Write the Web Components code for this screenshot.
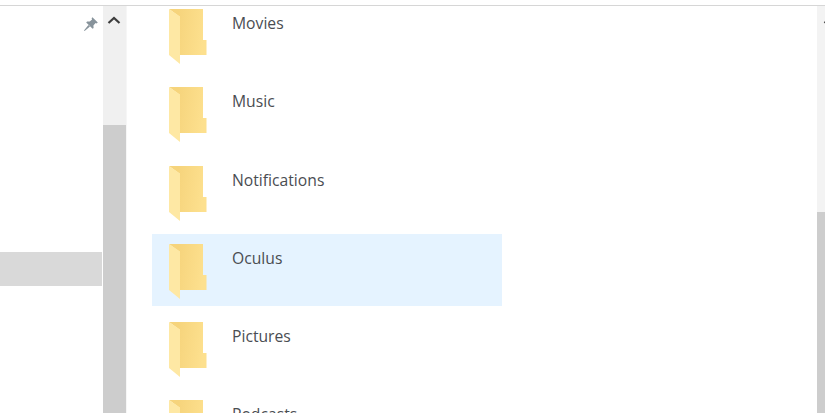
<!DOCTYPE html>
<html>
<head>
<meta charset="utf-8">
<style>
    html, body { margin: 0; padding: 0; background: #fff; }
    body { width: 825px; height: 413px; overflow: hidden; font-family: "Open Sans", "Noto Sans", sans-serif; }
</style>
</head>
<body>
<explorer-window>
    <side-pane slot="side"></side-pane>
    <scroll-rail slot="side" width="24" track="120" edge arrow></scroll-rail>
    <folder-list slot="main">
        <folder-row>Movies</folder-row>
        <folder-row>Music</folder-row>
        <folder-row>Notifications</folder-row>
        <folder-row selected>Oculus</folder-row>
        <folder-row>Pictures</folder-row>
        <folder-row>Podcasts</folder-row>
    </folder-list>
    <scroll-rail slot="right" width="8" track="207" clipped arrow></scroll-rail>
</explorer-window>

<script>
class ExplorerWindow extends HTMLElement {
    constructor() {
        super();
        this.attachShadow({mode: "open"}).innerHTML = `
        <style>
            :host {
                display: grid;
                grid-template-columns: 127px 1fr 8px;
                height: 413px;
                padding-top: 6px;
                box-sizing: border-box;
                background:
                    linear-gradient(#d6d6d6, #d6d6d6) 0 5px / 100% 1px no-repeat,
                    #fff;
            }
            .side { display: flex; min-height: 0; }
            .main { overflow: hidden; min-width: 0; }
            .right { display: flex; min-height: 0; }
        </style>
        <div class="side"><slot name="side"></slot></div>
        <div class="main"><slot name="main"></slot></div>
        <div class="right"><slot name="right"></slot></div>
        `;
    }
}

class SidePane extends HTMLElement {
    constructor() {
        super();
        this.attachShadow({mode: "open"}).innerHTML = `
        <style>
            :host {
                display: flex;
                flex-direction: column;
                width: 103px;
                flex: none;
            }
            .pin { display: flex; justify-content: flex-end; padding: 10px 4px 0 0; height: 16px; }
            svg { filter: blur(.3px); }
            .current {
                margin-top: 220px;
                height: 34px;
                width: 102px;
                background: #d9d9d9;
            }
        </style>
        <div class="pin">
            <svg width="16" height="16" viewBox="0 0 16 16">
                <g fill="#87939b">
                    <path d="M9.4 1.2 L14.8 6.6 L13.6 7.4 L12.6 6.9 L10.4 9.4 L10.6 12 L9.6 12.8 L3.2 6.4 L4.1 5.5 L6.7 5.6 L9.1 3.4 L8.6 2.3 Z"/>
                    <path d="M5.4 9 L7 10.6 L1.6 15 L1 14.4 Z"/>
                </g>
            </svg>
        </div>
        <div class="current"></div>
        `;
    }
}

class ScrollRail extends HTMLElement {
    constructor() {
        super();
        const w = this.getAttribute("width");
        const track = this.getAttribute("track");
        this.attachShadow({mode: "open"}).innerHTML = `
        <style>
            :host {
                display: flex;
                flex-direction: column;
                flex: none;
                width: ${w}px;
                box-sizing: border-box;
                overflow: hidden;
                background: #f0f0f0;
            }
            :host([edge]) { border-right: 1px solid #f6f6f6; }
            .track { height: ${track - 1}px; flex: none; position: relative; }
            .thumb { flex: 1; background: #cdcdcd; }
            svg { position: absolute; top: 9px; left: 3px; filter: blur(.3px); }
            :host([clipped]) svg { left: 5px; }
            :host([clipped]) { background: #f3f3f3; }
        </style>
        <div class="track">
            <svg width="16" height="10" viewBox="0 0 16 10">
                <path d="M2.5 8 L8 3 L13.5 8" fill="none" stroke="#3c3c3c" stroke-width="2.2"/>
            </svg>
        </div>
        <div class="thumb"></div>
        `;
    }
}

class FolderList extends HTMLElement {
    constructor() {
        super();
        this.attachShadow({mode: "open"}).innerHTML = `
        <style>
            :host {
                display: flex;
                flex-direction: column;
                gap: 6.3px;
                margin: -7px 0 0 25px;
                width: 350px;
            }
        </style>
        <slot></slot>
        `;
    }
}

class FolderRow extends HTMLElement {
    constructor() {
        super();
        this.attachShadow({mode: "open"}).innerHTML = `
        <style>
            :host {
                display: flex;
                flex: none;
                align-items: flex-start;
                gap: 25px;
                height: 72px;
                padding: 10px 0 0 17px;
                box-sizing: border-box;
                font-size: 15.7px;
                line-height: 28px;
                color: #4a4d52;
            }
            :host([selected]) { background: #e5f3ff; }
            svg { flex: none; filter: blur(.6px); }
        </style>
        <svg width="38" height="56" viewBox="0 0 38 56">
            <defs>
                <linearGradient id="back" x1="0" x2="1" y1="0" y2="0.15">
                    <stop offset="0.25" stop-color="#f6d47c"/>
                    <stop offset="1" stop-color="#fde08e"/>
                </linearGradient>
            </defs>
            <path d="M0 0 H34 V31 H37.5 V46 H11 V8 Z" fill="url(#back)"/>
            <path d="M0 0 L11 7.5 V55 L0 46 Z" fill="#fee8a4"/>
        </svg>
        <span><slot></slot></span>
        `;
    }
}

customElements.define("explorer-window", ExplorerWindow);
customElements.define("side-pane", SidePane);
customElements.define("scroll-rail", ScrollRail);
customElements.define("folder-list", FolderList);
customElements.define("folder-row", FolderRow);
</script>
</body>
</html>
